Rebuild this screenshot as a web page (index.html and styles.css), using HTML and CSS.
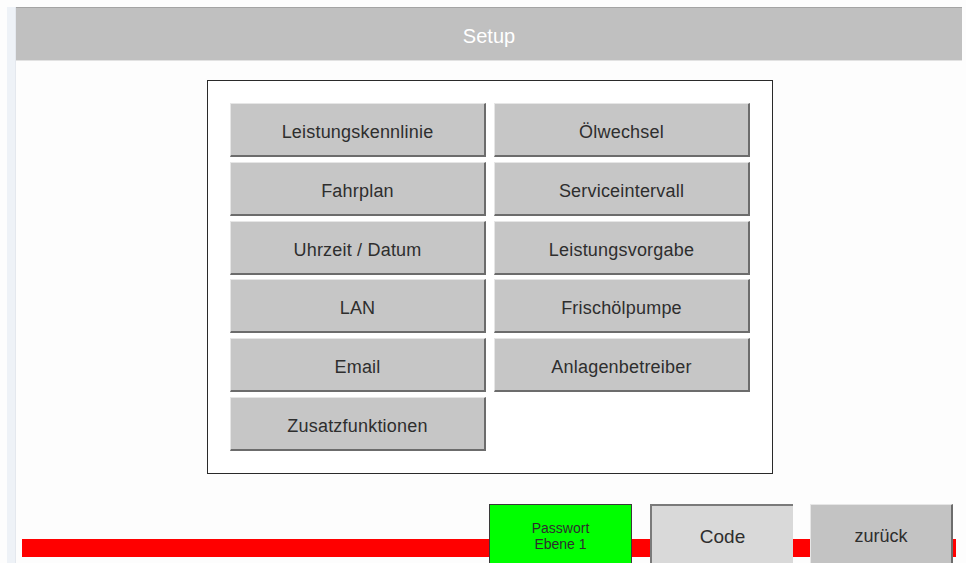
FILE: index.html
```html
<!DOCTYPE html>
<html lang="de">
<head>
    <meta charset="UTF-8">
    <title>Setup</title>
    <link rel="stylesheet" href="styles.css">
</head>
<body>

<div id="app">
    <div class="strip"></div>
    <div id="main">
        <div class="header">Setup</div>
        <div class="panel">
            <button class="knapp">Leistungskennlinie</button>
            <button class="knapp">Ölwechsel</button>
            <button class="knapp">Fahrplan</button>
            <button class="knapp">Serviceintervall</button>
            <button class="knapp">Uhrzeit / Datum</button>
            <button class="knapp">Leistungsvorgabe</button>
            <button class="knapp">LAN</button>
            <button class="knapp">Frischölpumpe</button>
            <button class="knapp">Email</button>
            <button class="knapp">Anlagenbetreiber</button>
            <button class="knapp">Zusatzfunktionen</button>
        </div>
        <div class="footer">
            <button class="passwort">Passwort<br>Ebene 1</button>
            <button class="code">Code</button>
            <button class="zurueck">zurück</button>
        </div>
    </div>
</div>

</body>
</html>
```

FILE: styles.css
```css
body {
    margin: 0;
    padding-top: 7px;
    width: 966px;
    height: 563px;
    overflow: hidden;
    background-color: #fdfdfd;
    font-family: "Liberation Sans", Arial, sans-serif;
    color: #2e2e2e;
    box-sizing: border-box;
}
#app {
    display: flex;
    height: 556px;
}
.strip {
    width: 9px;
    margin-left: 7px;
    background-color: #eef2f7;
    border-right: 1px solid #e4e8ee;
    box-sizing: border-box;
}
#main {
    width: 946px;
}
.header {
    height: 54px;
    background-color: #c0c0c0;
    border-top: 1px solid #a4a4a4;
    border-bottom: 1px solid #e2e2e2;
    box-sizing: border-box;
    color: white;
    font-size: 20px;
    line-height: 56px;
    text-align: center;
}
.panel {
    width: 566px;
    height: 394px;
    margin: 19px 0 0 191px;
    padding: 22px 0 0 22px;
    border: 1px solid #2a2a2a;
    box-sizing: border-box;
    background-color: white;
    display: grid;
    grid-template-columns: 256px 256px;
    grid-auto-rows: 54px;
    column-gap: 8px;
    row-gap: 4.8px;
    align-content: start;
}
button {
    font-family: inherit;
    color: inherit;
    padding: 0;
    box-sizing: border-box;
}
.knapp {
    background-color: #c6c6c6;
    border: none;
    border-top: 1px solid #e6e6e6;
    border-left: 1px solid #e6e6e6;
    border-right: 2px solid #6c6c6c;
    border-bottom: 2px solid #6c6c6c;
    font-size: 18px;
    letter-spacing: 0.2px;
    padding-top: 6px;
}
.footer {
    height: 59px;
    margin-top: 30px;
    padding-left: 473px;
    display: flex;
    align-items: flex-start;
    background: linear-gradient(#ff0000, #ff0000) no-repeat 6px 35px / 934px 18px;
}
.footer > button {
    width: 143px;
    height: 62px;
    flex-shrink: 0;
}
.passwort {
    background-color: #00ff00;
    border: 1px solid #3a3a3a;
    font-size: 14px;
    line-height: 16px;
    padding-top: 2px;
}
.code {
    margin-left: 18px;
    width: 142px;
    background-color: #d9d9d9;
    border: none;
    border-top: 2px solid #7a7a7a;
    border-left: 2px solid #7a7a7a;
    font-size: 19px;
    padding-top: 2px;
}
.zurueck {
    margin-left: 17px;
    background-color: #c3c3c3;
    border: none;
    border-top: 1px solid #e6e6e6;
    border-left: 1px solid #e6e6e6;
    border-right: 2px solid #6c6c6c;
    font-size: 18px;
    padding-top: 2px;
}
```
